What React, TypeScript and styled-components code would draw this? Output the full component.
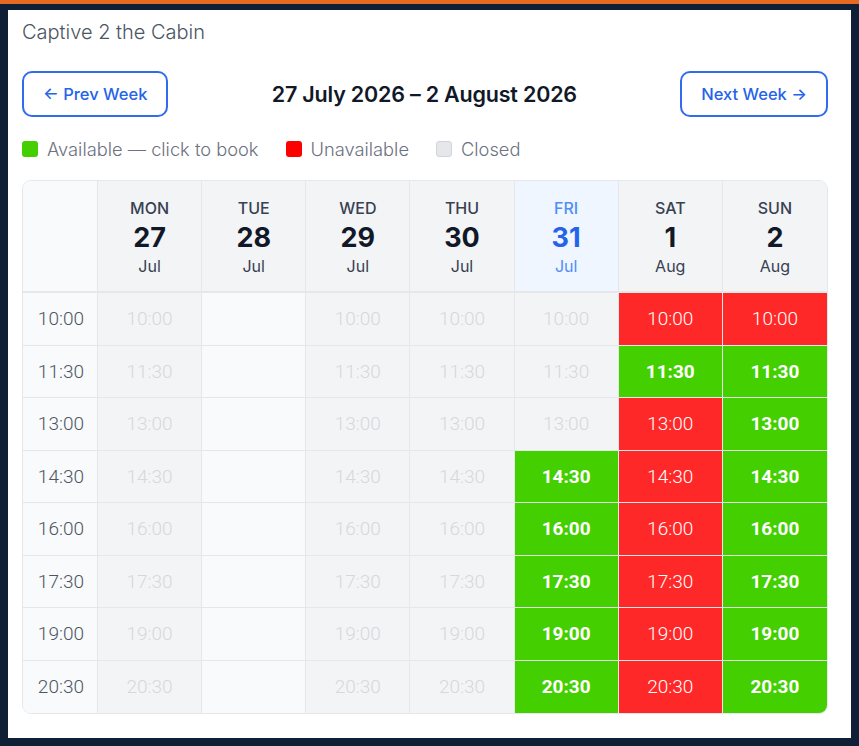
import React from "react";
import styled, { createGlobalStyle } from "styled-components";

const GlobalStyle = createGlobalStyle`
  html, body {
    margin: 0;
    padding: 0;
    background: #0f1f35;
  }
  body {
    border-top: 4px solid #e86a22;
    font-family: Inter, "Noto Sans", sans-serif;
  }
`;

type Slot = "closed" | "empty" | "free" | "taken";

const TIMES = ["10:00", "11:30", "13:00", "14:30", "16:00", "17:30", "19:00", "20:30"];

const DAYS = [
  { name: "MON", date: "27", month: "Jul" },
  { name: "TUE", date: "28", month: "Jul" },
  { name: "WED", date: "29", month: "Jul" },
  { name: "THU", date: "30", month: "Jul" },
  { name: "FRI", date: "31", month: "Jul", today: true },
  { name: "SAT", date: "1", month: "Aug" },
  { name: "SUN", date: "2", month: "Aug" },
];

// slot state per day, one entry per time
const SCHEDULE: Slot[][] = [
  Array(8).fill("closed"),
  Array(8).fill("empty"),
  Array(8).fill("closed"),
  Array(8).fill("closed"),
  ["closed", "closed", "closed", "free", "free", "free", "free", "free"],
  ["taken", "free", "taken", "taken", "taken", "taken", "taken", "taken"],
  ["taken", "free", "free", "free", "free", "free", "free", "free"],
];

const Panel = styled.main`
  background: #ffffff;
  margin: 6px 8px 9px 8px;
  padding: 8px 23px 24px 14px;
`;

const Title = styled.h1`
  margin: 0;
  font-size: 20px;
  font-weight: 300;
  color: #4b5563;
  line-height: 28px;
`;

const Toolbar = styled.div`
  display: flex;
  align-items: center;
  justify-content: space-between;
  margin-top: 25px;
`;

const NavButton = styled.button`
  height: 46px;
  padding: 0 19px;
  border: 2px solid #2f6cf0;
  border-radius: 10px;
  background: #ffffff;
  color: #2563eb;
  font-family: inherit;
  font-size: 16.5px;
  font-weight: 500;
  cursor: pointer;
`;

const WeekLabel = styled.h2`
  margin: 0;
  font-size: 21.5px;
  font-weight: 600;
  color: #111827;
  letter-spacing: -0.2px;
`;

const Legend = styled.div`
  display: flex;
  align-items: center;
  gap: 27px;
  margin-top: 21px;
`;

const LegendItem = styled.div`
  display: flex;
  align-items: center;
  gap: 9px;
  font-size: 18.3px;
  font-weight: 300;
  color: #6b7280;
`;

const Swatch = styled.span<{ $color: string; $bordered?: boolean }>`
  width: 16px;
  height: 16px;
  border-radius: 3px;
  box-sizing: border-box;
  background: ${(p) => p.$color};
  border: ${(p) => (p.$bordered ? "1px solid #d1d5db" : "none")};
`;

const Calendar = styled.div`
  display: grid;
  grid-template-columns: 75px repeat(7, 1fr);
  grid-template-rows: 112px repeat(8, 52.5px);
  margin-top: 20px;
  border: 1px solid #e5e7eb;
  border-radius: 9px;
  overflow: hidden;
`;

const Corner = styled.div`
  background: #f9fafb;
  border-right: 1px solid #e5e7eb;
  border-bottom: 2px solid #e5e7eb;
`;

const DayHead = styled.div<{ $today?: boolean; $last?: boolean }>`
  display: flex;
  flex-direction: column;
  align-items: center;
  justify-content: center;
  background: ${(p) => (p.$today ? "#eff6ff" : "#f3f4f6")};
  border-right: ${(p) => (p.$last ? "none" : "1px solid #e5e7eb")};
  border-bottom: 2px solid #e5e7eb;
`;

const DayName = styled.span<{ $today?: boolean }>`
  font-size: 16px;
  font-weight: 500;
  line-height: 20px;
  color: ${(p) => (p.$today ? "#4f8ef7" : "#374151")};
`;

const DayDate = styled.span<{ $today?: boolean }>`
  font-size: 27px;
  font-weight: 700;
  line-height: 39px;
  color: ${(p) => (p.$today ? "#2563eb" : "#111827")};
`;

const DayMonth = styled.span<{ $today?: boolean }>`
  font-size: 16px;
  font-weight: 400;
  line-height: 18px;
  color: ${(p) => (p.$today ? "#4f8ef7" : "#374151")};
`;

const TimeLabel = styled.div<{ $last?: boolean }>`
  display: flex;
  align-items: center;
  justify-content: flex-end;
  padding-right: 13px;
  background: #f9fafb;
  border-right: 1px solid #e5e7eb;
  border-bottom: ${(p) => (p.$last ? "none" : "1px solid #e5e7eb")};
  font-family: Roboto, sans-serif;
  font-size: 19px;
  font-weight: 300;
  color: #4b5563;
`;

const SLOT_BG: Record<Slot, string> = {
  closed: "#f3f4f6",
  empty: "#f9fafb",
  free: "#44cf00",
  taken: "#ff2828",
};

const SLOT_FG: Record<Slot, string> = {
  closed: "#d5d8dd",
  empty: "transparent",
  free: "#ffffff",
  taken: "#ffffff",
};

const SlotCell = styled.div<{ $slot: Slot; $lastRow?: boolean; $lastCol?: boolean }>`
  display: flex;
  align-items: center;
  justify-content: center;
  background: ${(p) => SLOT_BG[p.$slot]};
  color: ${(p) => SLOT_FG[p.$slot]};
  border-right: ${(p) => (p.$lastCol ? "none" : "1px solid #e5e7eb")};
  border-bottom: ${(p) => (p.$lastRow ? "none" : "1px solid #e5e7eb")};
  font-family: Roboto, sans-serif;
  font-size: 19px;
  font-weight: ${(p) => (p.$slot === "free" ? 700 : 300)};
  cursor: ${(p) => (p.$slot === "free" ? "pointer" : "default")};
`;

export default function App() {
  return (
    <>
      <GlobalStyle />
      <Panel>
        <Title>Captive 2 the Cabin</Title>
        <Toolbar>
          <NavButton>← Prev Week</NavButton>
          <WeekLabel>27 July 2026 – 2 August 2026</WeekLabel>
          <NavButton>Next Week →</NavButton>
        </Toolbar>
        <Legend>
          <LegendItem>
            <Swatch $color="#44cf00" />
            Available — click to book
          </LegendItem>
          <LegendItem>
            <Swatch $color="#ff0000" />
            Unavailable
          </LegendItem>
          <LegendItem>
            <Swatch $color="#e5e7eb" $bordered />
            Closed
          </LegendItem>
        </Legend>
        <Calendar>
          <Corner />
          {DAYS.map((d, i) => (
            <DayHead key={d.name} $today={d.today} $last={i === DAYS.length - 1}>
              <DayName $today={d.today}>{d.name}</DayName>
              <DayDate $today={d.today}>{d.date}</DayDate>
              <DayMonth $today={d.today}>{d.month}</DayMonth>
            </DayHead>
          ))}
          {TIMES.map((t, r) => (
            <React.Fragment key={t}>
              <TimeLabel $last={r === TIMES.length - 1}>{t}</TimeLabel>
              {DAYS.map((d, c) => {
                const slot = SCHEDULE[c][r];
                return (
                  <SlotCell
                    key={d.name}
                    $slot={slot}
                    $lastRow={r === TIMES.length - 1}
                    $lastCol={c === DAYS.length - 1}
                  >
                    {slot === "empty" ? "" : t}
                  </SlotCell>
                );
              })}
            </React.Fragment>
          ))}
        </Calendar>
      </Panel>
    </>
  );
}
